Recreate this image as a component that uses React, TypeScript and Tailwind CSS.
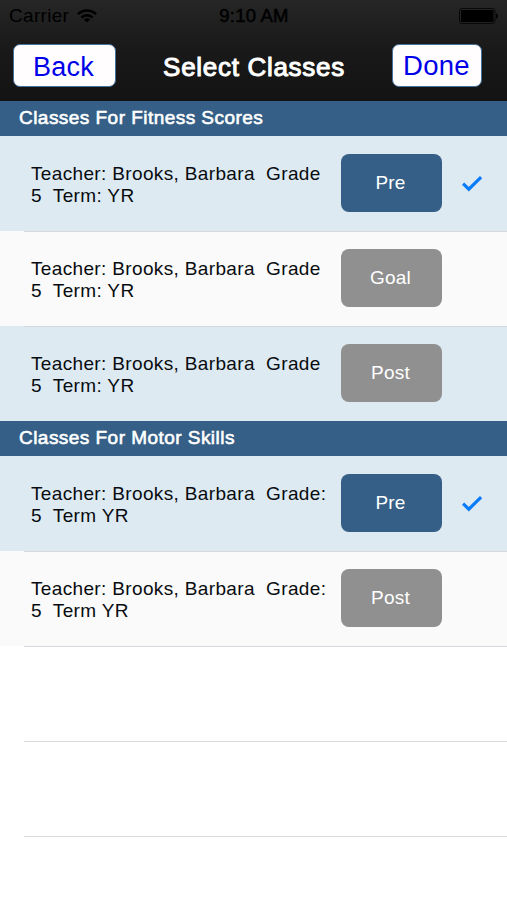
type ClassRow = { first: string; second: string; stage: string; selected?: boolean };

const fitness: ClassRow[] = [
  { first: 'Teacher: Brooks, Barbara  Grade', second: '5  Term: YR', stage: 'Pre', selected: true },
  { first: 'Teacher: Brooks, Barbara  Grade', second: '5  Term: YR', stage: 'Goal' },
  { first: 'Teacher: Brooks, Barbara  Grade', second: '5  Term: YR', stage: 'Post' },
];

const motor: ClassRow[] = [
  { first: 'Teacher: Brooks, Barbara  Grade:', second: '5  Term YR', stage: 'Pre', selected: true },
  { first: 'Teacher: Brooks, Barbara  Grade:', second: '5  Term YR', stage: 'Post' },
];

function WifiIcon() {
  return (
    <svg className="ml-[8px] h-[14px] w-5" viewBox="0 0 20 14" fill="none" stroke="#000" strokeWidth="2.5">
      <path d="M1 5.1a12.8 12.8 0 0 1 18 0" />
      <path d="M4.4 8.5a8 8 0 0 1 11.2 0" />
      <path d="M10 13.6 6.9 10.5a4.4 4.4 0 0 1 6.2 0Z" fill="#000" stroke="none" />
    </svg>
  );
}

function BatteryIcon() {
  return (
    <svg className="h-4 w-10" viewBox="0 0 40 16">
      <rect x="0.5" y="0.5" width="35.5" height="15" rx="2.5" fill="none" stroke="#080808" />
      <rect x="2" y="2" width="32.5" height="12" rx="1" fill="#000" />
      <path d="M37 5.2c2.6.6 2.6 5 0 5.6Z" fill="#000" />
    </svg>
  );
}

function SectionHeader({ title }: { title: string }) {
  return (
    <h2 className="h-[35px] bg-[#355f86] pl-[19px] text-[19px] leading-[33px] tracking-[0.46px] text-white [-webkit-text-stroke:0.6px_white]">
      {title}
    </h2>
  );
}

function Row({ row, shaded, line }: { row: ClassRow; shaded: boolean; line: boolean }) {
  return (
    <div className={`relative flex h-[95px] ${shaded ? 'bg-[#deeaf2]' : 'bg-[#fafafa]'}`}>
      <div className="w-[310px] shrink-0 whitespace-pre pt-[27px] pl-[31px] text-[19px] leading-[22px] tracking-[0.35px] text-[#080c10]">
        <p>{row.first}</p>
        <p>{row.second}</p>
      </div>
      <button
        className={`mt-[18px] ml-[31px] h-[58px] w-[101px] shrink-0 rounded-[8px] pr-[2px] text-[19px] tracking-[0.2px] text-white ${
          row.selected ? 'bg-[#355f86]' : 'bg-[#909090]'
        }`}
      >
        {row.stage}
      </button>
      {row.selected && (
        <svg className="mt-[39px] ml-[19px] h-[18px] w-[22px]" viewBox="0 0 22 18" fill="none" stroke="#087cfa" strokeWidth="3.2">
          <path d="m2.1 8.7 5.7 5.5L20.1 2.1" />
        </svg>
      )}
      {line && <div className="absolute right-0 -bottom-px left-6 z-10 h-[1.5px] bg-[#d6d6dd]" />}
    </div>
  );
}

export default function App() {
  return (
    <div className="h-[900px] w-[507px] overflow-hidden bg-white font-['Liberation_Sans',Arial,sans-serif]">
      <header className="h-[101px] bg-linear-to-b from-[#262626] via-[#191919] to-[#131313]">
        <div className="grid h-8 grid-cols-3 items-center pr-[8px] pl-[9px] text-[19px] text-black">
          <div className="flex items-center tracking-[0.3px]">
            <span>Carrier</span>
            <WifiIcon />
          </div>
          <span className="text-center text-[18.5px] tracking-[0.2px] [-webkit-text-stroke:0.5px_black]">9:10 AM</span>
          <div className="flex justify-end">
            <BatteryIcon />
          </div>
        </div>
        <div className="flex items-start pr-[25px] pl-[13px]">
          <button className="mt-3 h-[43px] w-[103px] rounded-[7px] border border-[#447199] bg-[#fffdfe] pr-[2px] text-[27px] leading-[44px] tracking-[0.3px] text-[#0000e8]">
            Back
          </button>
          <h1 className="flex-1 pt-[17px] text-center text-[26px] leading-9 tracking-[0.7px] text-white [-webkit-text-stroke:1px_white]">
            Select Classes
          </h1>
          <button className="mt-3 h-[43px] w-[90px] rounded-[7px] border border-[#447199] bg-[#fffdfe] pr-px text-[27.5px] leading-[39px] tracking-[0.3px] text-[#0000e8]">
            <span className="block -mt-px">Done</span>
          </button>
        </div>
      </header>
      <main>
        <SectionHeader title="Classes For Fitness Scores" />
        {fitness.map((row, i) => (
          <Row key={i} row={row} shaded={i % 2 === 0} line={i < fitness.length - 1} />
        ))}
        <SectionHeader title="Classes For Motor Skills" />
        {motor.map((row, i) => (
          <Row key={i} row={row} shaded={i % 2 === 0} line />
        ))}
        <div className="ml-6 h-24 border-b border-[#d9d9dc]" />
        <div className="ml-6 h-[95px] border-b border-[#d9d9dc]" />
      </main>
    </div>
  );
}
